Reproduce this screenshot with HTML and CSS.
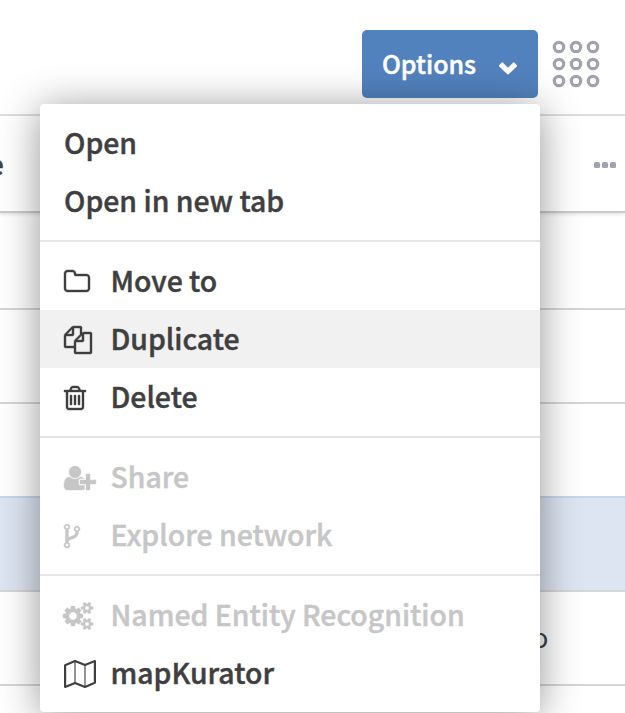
FILE: index.html
```html
<!DOCTYPE html>
<html lang="en">
<head>
<meta charset="utf-8">
<title>Documents</title>
<link rel="stylesheet" href="styles.css">
</head>
<body>
<header class="toolbar">
  <button class="options" type="button"><span class="label">Options</span>
    <svg class="chevron" viewBox="0 0 20 14"><path d="M1.2 4.2 3.6 1.6Q4.2 1 4.8 1.6L10 6.8 15.2 1.6Q15.8 1 16.4 1.6L18.8 4.2Q19.4 4.8 18.8 5.4L10.6 13.3Q10 13.9 9.4 13.3L1.2 5.4Q.6 4.8 1.2 4.2Z"/></svg>
  </button>
  <svg class="grid-icon" viewBox="0 0 48 48">
    <circle cx="7" cy="7" r="4.7"/><circle cx="24" cy="7" r="4.7"/><circle cx="41" cy="7" r="4.7"/>
    <circle cx="7" cy="24" r="4.7"/><circle cx="24" cy="24" r="4.7"/><circle cx="41" cy="24" r="4.7"/>
    <circle cx="7" cy="41" r="4.7"/><circle cx="24" cy="41" r="4.7"/><circle cx="41" cy="41" r="4.7"/>
  </svg>
</header>
<div class="table-head">
  <span class="head-cell">e</span>
  <svg class="dots" viewBox="0 0 22 6"><rect width="6" height="6" rx="1.5"/><rect x="8" width="6" height="6" rx="1.5"/><rect x="16" width="6" height="6" rx="1.5"/></svg>
</div>
<main class="rows">
  <div class="row"></div>
  <div class="row"></div>
  <div class="row before-selected"></div>
  <div class="row selected"></div>
  <div class="row"><span class="cell">o</span></div>
</main>

<nav class="menu">
  <ul class="group">
    <li class="item"><span class="label">Open</span></li>
    <li class="item"><span class="label">Open in new tab</span></li>
  </ul>
  <ul class="group">
    <li class="item"><svg class="icon" viewBox="64 0 1792 1792"><path d="M1600 1312v-704q0-40-28-68t-68-28h-704q-40 0-68-28t-28-68v-64q0-40-28-68t-68-28h-320q-40 0-68 28t-28 68v960q0 40 28 68t68 28h1216q40 0 68-28t28-68zm128-704v704q0 92-66 158t-158 66h-1216q-92 0-158-66t-66-158v-960q0-92 66-158t158-66h320q92 0 158 66t66 158v32h672q92 0 158 66t66 158z"/></svg><span class="label">Move to</span></li>
    <li class="item active"><svg class="icon" viewBox="0 0 1792 1792"><path d="M1696 384q40 0 68 28t28 68v1216q0 40-28 68t-68 28h-960q-40 0-68-28t-28-68v-288h-544q-40 0-68-28t-28-68v-672q0-40 20-88t48-76l408-408q28-28 76-48t88-20h416q40 0 68 28t28 68v328q68-40 128-40h416zm-544 213l-299 299h299v-299zm-640-384l-299 299h299v-299zm196 647l316-316v-416h-384v416q0 40-28 68t-68 28h-416v640h512v-256q0-40 20-88t48-76zm956 804v-1152h-384v416q0 40-28 68t-68 28h-416v640h896z"/></svg><span class="label">Duplicate</span></li>
    <li class="item"><svg class="icon" viewBox="192 0 1792 1792"><path d="M704 736v576q0 14-9 23t-23 9h-64q-14 0-23-9t-9-23v-576q0-14 9-23t23-9h64q14 0 23 9t9 23zm256 0v576q0 14-9 23t-23 9h-64q-14 0-23-9t-9-23v-576q0-14 9-23t23-9h64q14 0 23 9t9 23zm256 0v576q0 14-9 23t-23 9h-64q-14 0-23-9t-9-23v-576q0-14 9-23t23-9h64q14 0 23 9t9 23zm128 724v-948h-896v948q0 22 7 40.5t14.5 27 10.5 8.5h832q3 0 10.5-8.5t14.5-27 7-40.5zm-672-1076h448l-48-117q-7-9-17-11h-317q-10 2-17 11zm928 32v64q0 14-9 23t-23 9h-96v948q0 83-47 143.5t-113 60.5h-832q-66 0-113-58.5t-47-141.5v-952h-96q-14 0-23-9t-9-23v-64q0-14 9-23t23-9h309l70-167q15-37 54-63t79-26h320q40 0 79 26t54 63l70 167h309q14 0 23 9t9 23z"/></svg><span class="label">Delete</span></li>
  </ul>
  <ul class="group">
    <li class="item disabled"><svg class="icon wide" viewBox="0 0 2048 1792"><path d="M704 896q-159 0-271.5-112.5t-112.5-271.5 112.5-271.5 271.5-112.5 271.5 112.5 112.5 271.5-112.5 271.5-271.5 112.5zm960 128h352q13 0 22.5 9.5t9.5 22.5v192q0 13-9.5 22.5t-22.5 9.5h-352v352q0 13-9.5 22.5t-22.5 9.5h-192q-13 0-22.5-9.5t-9.5-22.5v-352h-352q-13 0-22.5-9.5t-9.5-22.5v-192q0-13 9.5-22.5t22.5-9.5h352v-352q0-13 9.5-22.5t22.5-9.5h192q13 0 22.5 9.5t9.5 22.5v352zm-736 224q0 52 38 90t90 38h256v238q-68 50-171 50h-874q-121 0-194-69t-73-190q0-53 3.5-103.5t14-109 26.5-108.5 43-97.5 62-81 85.5-53.5 111.5-20q19 0 39 17 79 61 154.5 91.5t164.5 30.5 164.5-30.5 154.5-91.5q20-17 39-17 132 0 217 96h-223q-52 0-90 38t-38 90v192z"/></svg><span class="label">Share</span></li>
    <li class="item disabled"><svg class="icon" viewBox="384 0 1792 1792"><path d="M672 1472q0-40-28-68t-68-28-68 28-28 68 28 68 68 28 68-28 28-68zm0-1152q0-40-28-68t-68-28-68 28-28 68 28 68 68 28 68-28 28-68zm640 128q0-40-28-68t-68-28-68 28-28 68 28 68 68 28 68-28 28-68zm96 0q0 52-26 96.5t-70 69.5q-2 287-226 414-67 38-203 81-128 40-169.5 71t-41.5 100v26q44 25 70 69.5t26 96.5q0 80-56 136t-136 56-136-56-56-136q0-52 26-96.5t70-69.5v-820q-44-25-70-69.5t-26-96.5q0-80 56-136t136-56 136 56 56 136q0 52-26 96.5t-70 69.5v497q54-26 154-57 55-17 87.5-29.5t70.5-31 59-39.5 40.5-51 28-69.5 8.5-91.5q-44-25-70-69.5t-26-96.5q0-80 56-136t136-56 136 56 56 136z"/></svg><span class="label">Explore network</span></li>
  </ul>
  <ul class="group">
    <li class="item disabled"><svg class="icon wide" viewBox="0 0 2048 1792"><path d="M832 896q0-106-75-181t-181-75-181 75-75 181 75 181 181 75 181-75 75-181zm768 512q0-52-38-90t-90-38-90 38-38 90q0 53 37.5 90.5t90.5 37.5 90.5-37.5 37.5-90.5zm0-1024q0-52-38-90t-90-38-90 38-38 90q0 53 37.5 90.5t90.5 37.5 90.5-37.5 37.5-90.5zm-384 421v185q0 10-7 19.5t-16 10.5l-155 24q-11 35-32 76 34 48 90 115 7 11 7 20 0 12-7 19-23 30-82.5 89.5t-78.5 59.5q-11 0-21-7l-115-90q-37 19-77 31-11 108-23 155-7 24-30 24h-186q-11 0-20-7.5t-10-17.5l-23-153q-34-10-75-31l-118 89q-7 7-20 7-11 0-21-8-144-133-144-160 0-9 7-19 10-14 41-53t47-61q-23-44-35-82l-152-24q-10-1-17-9.5t-7-19.5v-185q0-10 7-19.5t16-10.5l155-24q11-35 32-76-34-48-90-115-7-11-7-20 0-12 7-20 22-30 82-89t79-59q11 0 21 7l115 90q34-18 77-32 11-108 23-154 7-24 30-24h186q11 0 20 7.5t10 17.5l23 153q34 10 75 31l118-89q8-7 20-7 11 0 21 8 144 133 144 160 0 8-7 19-12 16-42 54t-45 60q23 48 34 82l152 23q10 2 17 10.5t7 19.5zm640 533v140q0 16-149 31-12 27-30 52 51 113 51 138 0 4-4 7-122 71-124 71-8 0-46-47t-52-68q-20 2-30 2t-30-2q-14 21-52 68t-46 47q-2 0-124-71-4-3-4-7 0-25 51-138-18-25-30-52-149-15-149-31v-140q0-16 149-31 13-29 30-52-51-113-51-138 0-4 4-7 4-2 35-20t59-34 30-16q8 0 46 46.5t52 67.5q20-2 30-2t30 2q51-71 92-112l6-2q4 0 124 70 4 3 4 7 0 25-51 138 17 23 30 52 149 15 149 31zm0-1024v140q0 16-149 31-12 27-30 52 51 113 51 138 0 4-4 7-122 71-124 71-8 0-46-47t-52-68q-20 2-30 2t-30-2q-14 21-52 68t-46 47q-2 0-124-71-4-3-4-7 0-25 51-138-18-25-30-52-149-15-149-31v-140q0-16 149-31 13-29 30-52-51-113-51-138 0-4 4-7 4-2 35-20t59-34 30-16q8 0 46 46.5t52 67.5q20-2 30-2t30 2q51-71 92-112l6-2q4 0 124 70 4 3 4 7 0 25-51 138 17 23 30 52 149 15 149 31z"/></svg><span class="label">Named Entity Recognition</span></li>
    <li class="item"><svg class="icon wide" viewBox="0 0 32 28"><g fill="none" stroke="currentColor" stroke-linejoin="round"><path stroke-width="2.2" d="M1.1 5.2 11 1.1 21 5.1 30.9 1.1V22.8L21 26.9 11 22.9 1.1 26.9Z"/><path stroke-width="1.1" d="M11 1.5V23M21 5V26.5"/></g></svg><span class="label">mapKurator</span></li>
  </ul>
</nav>
</body>
</html>
```
FILE: styles.css
```css
* { box-sizing: border-box; }

body {
  margin: 0;
  height: 713px;
  overflow: hidden;
  position: relative;
  background: #fff;
  color: #3f3f3f;
  font-family: "Noto Sans CJK SC", "Noto Sans", sans-serif;
  font-size: 28.4px;
  font-weight: 500;
}

.label {
  margin-top: -2px;
  -webkit-text-stroke: .45px currentColor;
}

.toolbar {
  height: 116px;
  padding: 30px 25px 0 0;
  border-bottom: 2px solid #e3e3e3;
  display: flex;
  justify-content: flex-end;
  align-items: flex-start;
  gap: 14px;
}

.options {
  width: 176px;
  height: 68px;
  padding: 0 20px;
  border: 0;
  border-radius: 5px;
  background: #5282be;
  color: #fff;
  font: inherit;
  font-size: 25px;
  display: flex;
  align-items: center;
  justify-content: space-between;
}

.chevron { width: 20px; height: 14px; margin-top: 7px; fill: currentColor; }

.grid-icon {
  width: 48px;
  height: 48px;
  margin-top: 9.5px;
  fill: none;
  stroke: #a0a2af;
  stroke-width: 3.2;
}

.table-head {
  height: 97px;
  padding-right: 9px;
  border-bottom: 2px solid #cbcbcb;
  box-shadow: 0 1px 4px rgba(0, 0, 0, .14);
  display: flex;
  align-items: center;
  justify-content: space-between;
}

.head-cell { margin: -1px 0 0 -11px; font-size: 26px; -webkit-text-stroke: .4px currentColor; }
.dots { width: 22px; height: 6px; margin-top: 3px; fill: #a0a4b0; }

.row {
  height: 94px;
  border-bottom: 2px solid #d5d6da;
  display: flex;
  align-items: center;
}
.row:first-child { height: 97px; }
.before-selected { border-bottom-color: #c6d7eb; }
.selected { background: #dde5f2; }
.cell { margin: -3px 0 0 532px; font-size: 27px; font-weight: 400; }

.menu {
  position: absolute;
  left: 40px;
  top: 104px;
  width: 500px;
  border-radius: 4px;
  background: #fff;
  box-shadow: 0 4px 40px rgba(0, 0, 0, .42);
}

.group {
  margin: 0;
  padding: 10px 0;
  list-style: none;
}
.group + .group { border-top: 2px solid #e4e4e4; }

.item {
  height: 58px;
  padding: 0 24px;
  display: flex;
  align-items: center;
  white-space: nowrap;
  line-height: 58px;
}
.active { background: #f1f1f1; }
.disabled { color: #c6c6c6; }

.icon {
  width: 28px;
  height: 28px;
  margin: 2px 18.5px 0 0;
  flex: none;
  overflow: visible;
  fill: currentColor;
  stroke: currentColor;
  stroke-width: 26;
}
.wide { width: 32px; margin-right: 14.5px; }
```
